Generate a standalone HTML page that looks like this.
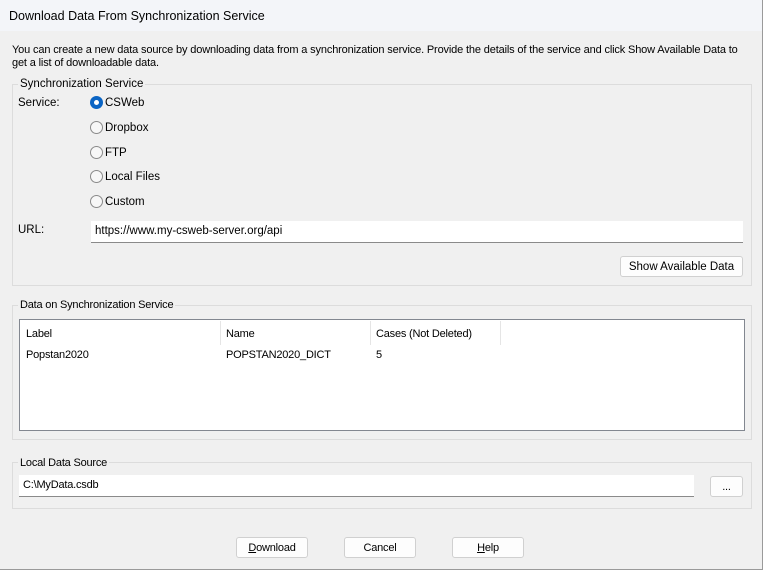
<!DOCTYPE html>
<html><head><meta charset="utf-8"><style>
*{box-sizing:border-box;margin:0;padding:0}
body{width:763px;height:570px;background:#f0f0f0;font-family:"Liberation Sans",sans-serif;font-size:11.5px;color:#000;position:relative;overflow:hidden}
.a{position:absolute;white-space:nowrap}
.title{position:absolute;left:0;top:0;width:763px;height:31px;background:#f3f5f9}
.grp{position:absolute;border:1px solid #dcdcdc}
.gl{position:absolute;background:#f0f0f0;padding:0 2px;line-height:12px}
.radio{position:absolute;width:13px;height:13px;border:1px solid #8a8a8a;border-radius:50%;background:#f7f7f7}
.radio.on{border:none;background:#0a64c4}
.radio.on::after{content:"";position:absolute;left:4px;top:4px;width:5px;height:5px;border-radius:50%;background:#fff}
.inp{position:absolute;background:#fff;border-bottom:1px solid #8a8a8a;padding-left:4px;line-height:21px}
.btn{position:absolute;background:#fdfdfd;border:1px solid #d0d0d0;border-radius:3px;text-align:center;line-height:20px}
.n{font-size:11px;letter-spacing:-0.2px}
</style></head><body>
<div class="title"></div>
<div class="a" style="left:9px;top:9px;font-size:12.5px">Download Data From Synchronization Service</div>
<div style="position:absolute;right:0;top:0;width:1px;height:570px;background:#9a9a9a"></div>
<div style="position:absolute;left:0;top:569px;width:763px;height:1px;background:#9a9a9a"></div>
<div class="a" style="left:12px;top:44px;line-height:13px;font-size:11px;letter-spacing:-0.15px">You can create a new data source by downloading data from a synchronization service. Provide the details of the service and click Show Available Data to<br>get a list of downloadable data.</div>

<div class="grp" style="left:12px;top:84px;width:740px;height:202px"></div>
<div class="gl" style="left:18px;top:78px">Synchronization Service</div>
<div class="a" style="left:18px;top:97px">Service:</div>
<div class="radio on" style="left:90px;top:96px"></div><div class="a" style="left:105px;top:97px">CSWeb</div>
<div class="radio" style="left:90px;top:121px"></div><div class="a" style="left:105px;top:122px">Dropbox</div>
<div class="radio" style="left:90px;top:146px"></div><div class="a" style="left:105px;top:147px">FTP</div>
<div class="radio" style="left:90px;top:170px"></div><div class="a" style="left:105px;top:171px">Local Files</div>
<div class="radio" style="left:90px;top:195px"></div><div class="a" style="left:105px;top:196px">Custom</div>
<div class="a" style="left:18px;top:224px">URL:</div>
<div class="inp" style="left:91px;top:221px;width:652px;height:22px">https://www.my-csweb-server.org/api</div>
<div class="btn" style="left:620px;top:256px;width:123px;height:21px">Show Available Data</div>

<div class="grp n" style="left:12px;top:305px;width:740px;height:135px"></div>
<div class="gl n" style="left:18px;top:299px">Data on Synchronization Service</div>
<div style="position:absolute;left:19px;top:319px;width:726px;height:112px;background:#fff;border:1px solid #828790"></div>
<div style="position:absolute;left:220px;top:321px;width:1px;height:24px;background:#e5e5e5"></div>
<div style="position:absolute;left:370px;top:321px;width:1px;height:24px;background:#e5e5e5"></div>
<div style="position:absolute;left:500px;top:321px;width:1px;height:24px;background:#e5e5e5"></div>
<div class="a n" style="left:26px;top:328px">Label</div>
<div class="a n" style="left:226px;top:328px">Name</div>
<div class="a n" style="left:376px;top:328px">Cases (Not Deleted)</div>
<div class="a n" style="left:26px;top:349px">Popstan2020</div>
<div class="a n" style="left:226px;top:349px">POPSTAN2020_DICT</div>
<div class="a n" style="left:376px;top:349px">5</div>

<div class="grp" style="left:12px;top:462px;width:740px;height:47px"></div>
<div class="gl n" style="left:18px;top:457px">Local Data Source</div>
<div class="inp n" style="left:19px;top:475px;width:675px;height:22px">C:\MyData.csdb</div>
<div class="btn n" style="left:710px;top:476px;width:33px;height:21px">...</div>

<div class="btn n" style="left:236px;top:537px;width:72px;height:21px"><u>D</u>ownload</div>
<div class="btn n" style="left:344px;top:537px;width:72px;height:21px">Cancel</div>
<div class="btn n" style="left:452px;top:537px;width:72px;height:21px"><u>H</u>elp</div>
</body></html>
